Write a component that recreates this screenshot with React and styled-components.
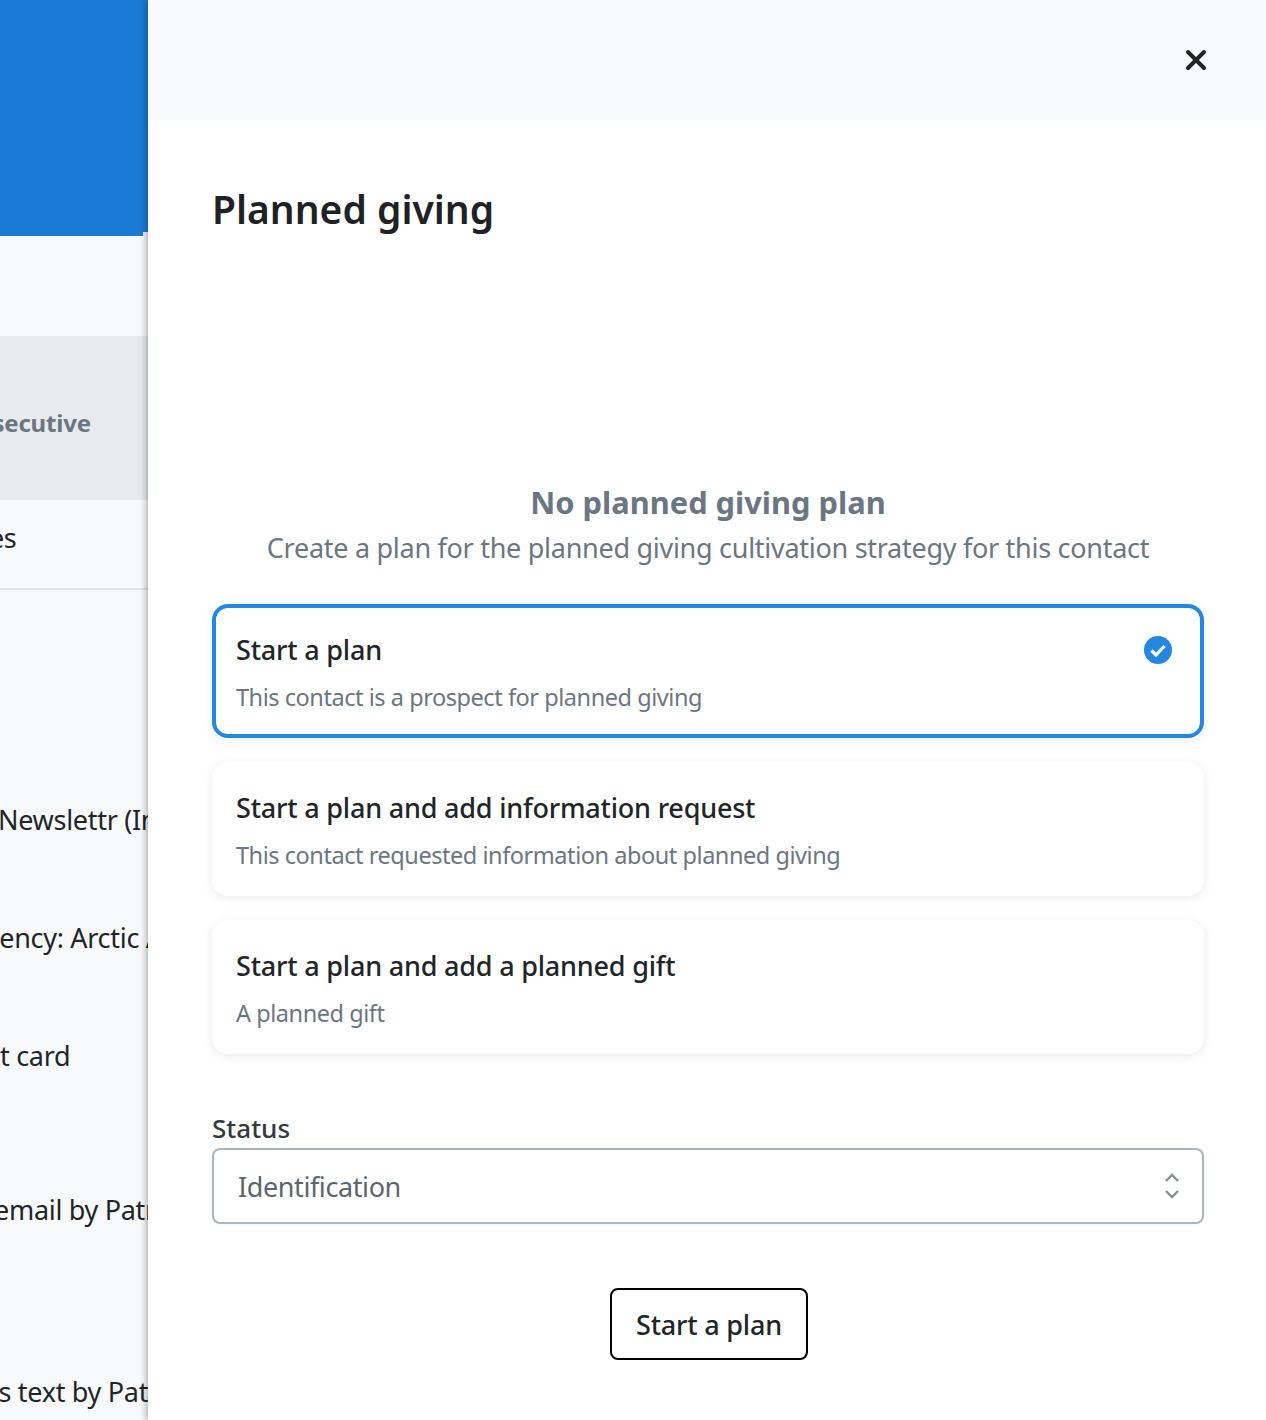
import styled, { createGlobalStyle } from 'styled-components';

const GlobalStyle = createGlobalStyle`
  html, body {
    margin: 0;
    padding: 0;
    background: #fff;
  }
  body {
    font-family: "Noto Sans", "Open Sans", sans-serif;
    color: #212529;
  }
`;

const Page = styled.div`
  display: flex;
  width: 1266px;
  height: 1420px;
  overflow: hidden;
`;

const Backdrop = styled.div`
  width: 148px;
  flex: none;
  background: #f8f9fb;
  overflow: hidden;
  display: flex;
  flex-direction: column;
`;

const Hero = styled.div`
  height: 236px;
  flex: none;
  background: #1a7bd6;
  position: relative;

  &::after {
    content: '';
    position: absolute;
    right: 0;
    bottom: 0;
    width: 5px;
    height: 4px;
    background: #f8f9fb;
  }
`;

const Spacer = styled.div`
  height: 100px;
  flex: none;
`;

const Band = styled.div`
  box-sizing: border-box;
  height: 164px;
  flex: none;
  display: flex;
  align-items: center;
  padding-top: 8px;
  background: #e9eaee;
  color: #6b7683;
  font-size: 24px;
  letter-spacing: -0.2px;
  font-weight: 700;
  white-space: nowrap;
`;

const TabRow = styled.div`
  height: 74px;
  padding-bottom: 14px;
  flex: none;
  display: flex;
  align-items: center;
  border-bottom: 2px solid #e3e4e7;
  font-size: 27px;
  letter-spacing: -0.3px;
  white-space: nowrap;
`;

const Feed = styled.div`
  display: flex;
  flex-direction: column;
  padding-top: 211px;
`;

const FeedItem = styled.div`
  height: ${(p) => p.$h}px;
  flex: none;
  font-size: 27px;
  letter-spacing: -0.3px;
  line-height: 38px;
  white-space: nowrap;
  color: #212529;
`;

const Clipped = styled.span`
  display: inline-block;
  margin-left: ${(p) => p.$shift || 0}px;
`;

const Drawer = styled.div`
  flex: 1;
  display: flex;
  flex-direction: column;
  background: #fff;
  box-shadow: -2px 0 6px rgba(0, 0, 0, 0.3);
  position: relative;
`;

const DrawerTop = styled.div`
  height: 120px;
  flex: none;
  display: flex;
  align-items: center;
  justify-content: flex-end;
  padding-right: 58px;
  background: #f8f9fb;
`;

const CloseButton = styled.button`
  border: 0;
  padding: 0;
  background: none;
  width: 24px;
  height: 24px;
  display: flex;
  color: #212529;
`;

const DrawerBody = styled.div`
  flex: 1;
  display: flex;
  flex-direction: column;
  padding: 64px 62px 0 64px;
`;

const Title = styled.h1`
  margin: -1px 0 1px;
  font-size: 39px;
  line-height: 52px;
  font-weight: 600;
  color: #1f2225;
`;

const Empty = styled.div`
  margin-top: 246px;
  text-align: center;
`;

const EmptyTitle = styled.div`
  font-size: 30.8px;
  line-height: 40px;
  font-weight: 700;
  color: #6b7683;
`;

const EmptyText = styled.div`
  margin-top: 7px;
  font-size: 27px;
  letter-spacing: -0.28px;
  line-height: 38px;
  color: #6b7683;
`;

const Options = styled.div`
  margin-top: 37px;
  display: flex;
  flex-direction: column;
  gap: 24px;
`;

const Option = styled.div`
  box-sizing: border-box;
  height: 134px;
  padding: ${(p) => (p.$selected ? '23px 20px' : '27px 24px')};
  border-radius: 16px;
  border: ${(p) => (p.$selected ? '4px solid #2488e0' : '0')};
  background: #fff;
  box-shadow: 0 2px 12px rgba(0, 0, 0, 0.08);
  display: flex;
  justify-content: space-between;
  align-items: flex-start;
`;

const OptionText = styled.div`
  display: flex;
  flex-direction: column;
  gap: 10px;
`;

const OptionTitle = styled.div`
  font-size: 27px;
  letter-spacing: -0.2px;
  line-height: 38px;
  font-weight: 500;
  color: #212529;
`;

const OptionNote = styled.div`
  font-size: 23.5px;
  letter-spacing: -0.45px;
  line-height: 36px;
  color: #6b7683;
`;

const CheckMark = styled.svg`
  width: 28px;
  height: 28px;
  margin: 5px 8px 0 0;
  flex: none;
`;

const Field = styled.div`
  margin-top: 58px;
  display: flex;
  flex-direction: column;
`;

const FieldLabel = styled.label`
  font-size: 26px;
  line-height: 32px;
  font-weight: 500;
  color: #343a40;
  height: 36px;
`;

const SelectBox = styled.div`
  box-sizing: border-box;
  height: 76px;
  border: 2px solid #adb5bd;
  border-radius: 8px;
  display: flex;
  align-items: center;
  justify-content: space-between;
  padding: 0 22px 0 24px;
  font-size: 27px;
  letter-spacing: -0.4px;
  color: #5d666e;
  box-shadow: 0 1px 4px rgba(0, 0, 0, 0.04);
`;

const Chevrons = styled.svg`
  width: 16px;
  height: 28px;
  flex: none;
`;

const Actions = styled.div`
  margin-top: 64px;
  padding-left: 2px;
  display: flex;
  justify-content: center;
`;

const PlanButton = styled.button`
  box-sizing: border-box;
  width: 198px;
  height: 72px;
  background: #fff;
  border: 2px solid #000;
  border-radius: 8px;
  font-family: inherit;
  font-size: 27px;
  letter-spacing: -0.2px;
  font-weight: 500;
  color: #212529;
`;

const options = [
  { title: 'Start a plan', note: 'This contact is a prospect for planned giving', selected: true },
  { title: 'Start a plan and add information request', note: 'This contact requested information about planned giving' },
  { title: 'Start a plan and add a planned gift', note: 'A planned gift' },
];

const feed = [
  { text: 'Newslettr (Internal)', h: 118, shift: -2 },
  { text: 'Agency: Arctic Air', h: 118, shift: -34 },
  { text: 'Credit card', h: 154, shift: -65 },
  { text: 'Sent email by Patrick', h: 182, shift: -68 },
  { text: 'Sms text by Patrick', h: 60, shift: -41 },
];

export default function App() {
  return (
    <>
      <GlobalStyle />
      <Page>
        <Backdrop>
          <Hero />
          <Spacer />
          <Band><Clipped $shift={-53}>Consecutive</Clipped></Band>
          <TabRow><Clipped $shift={-93}>Activities</Clipped></TabRow>
          <Feed>
            {feed.map((item) => (
              <FeedItem key={item.text} $h={item.h}>
                <Clipped $shift={item.shift}>{item.text}</Clipped>
              </FeedItem>
            ))}
          </Feed>
        </Backdrop>
        <Drawer>
          <DrawerTop>
            <CloseButton aria-label="Close">
              <svg viewBox="0 0 24 24" width="24" height="24" fill="none" stroke="currentColor" strokeWidth="4" strokeLinecap="round">
                <path d="M4 4l16 16M20 4L4 20" />
              </svg>
            </CloseButton>
          </DrawerTop>
          <DrawerBody>
            <Title>Planned giving</Title>
            <Empty>
              <EmptyTitle>No planned giving plan</EmptyTitle>
              <EmptyText>Create a plan for the planned giving cultivation strategy for this contact</EmptyText>
            </Empty>
            <Options>
              {options.map((o) => (
                <Option key={o.title} $selected={o.selected}>
                  <OptionText>
                    <OptionTitle>{o.title}</OptionTitle>
                    <OptionNote>{o.note}</OptionNote>
                  </OptionText>
                  {o.selected && (
                    <CheckMark viewBox="0 0 28 28">
                      <circle cx="14" cy="14" r="14" fill="#2488e0" />
                      <path d="M7.5 14.5l4.5 4.5 8.5-9" fill="none" stroke="#fff" strokeWidth="3.2" />
                    </CheckMark>
                  )}
                </Option>
              ))}
            </Options>
            <Field>
              <FieldLabel>Status</FieldLabel>
              <SelectBox>
                Identification
                <Chevrons viewBox="0 0 16 28" fill="none" stroke="#868e96" strokeWidth="2.4">
                  <path d="M2 9l6-6 6 6M2 19l6 6 6-6" />
                </Chevrons>
              </SelectBox>
            </Field>
            <Actions>
              <PlanButton>Start a plan</PlanButton>
            </Actions>
          </DrawerBody>
        </Drawer>
      </Page>
    </>
  );
}
